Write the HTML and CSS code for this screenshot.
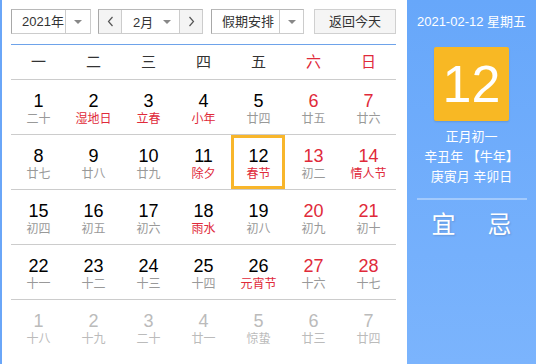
FILE: index.html
```html
<!DOCTYPE html>
<html lang="zh-CN">
<head>
  <meta charset="UTF-8">
  <title>万年历</title>
  <link rel="stylesheet" href="styles.css">
</head>
<body>
  <div class="calendar">
    <div class="main">
      <div class="toolbar">
        <div class="select year">
          <span class="value">2021年</span>
          <span class="drop"><i class="caret"></i></span>
        </div>
        <div class="month-group">
          <span class="nav prev">
            <svg width="7" height="11" viewBox="0 0 7 11"><path d="M5.5 1 L1.5 5.5 L5.5 10" fill="none" stroke="#555" stroke-width="1.2"/></svg>
          </span>
          <div class="month">
            <span class="value">2月</span>
            <i class="caret"></i>
          </div>
          <span class="nav next">
            <svg width="7" height="11" viewBox="0 0 7 11"><path d="M1.5 1 L5.5 5.5 L1.5 10" fill="none" stroke="#555" stroke-width="1.2"/></svg>
          </span>
        </div>
        <div class="select holiday">
          <span class="value">假期安排</span>
          <span class="drop"><i class="caret"></i></span>
        </div>
        <span class="today-btn">返回今天</span>
      </div>

      <div class="weekdays">
        <span>一</span><span>二</span><span>三</span><span>四</span><span>五</span>
        <span class="red">六</span><span class="red">日</span>
      </div>

      <div class="days">
        <div class="day"><b>1</b><small>二十</small></div>
        <div class="day fest"><b>2</b><small>湿地日</small></div>
        <div class="day fest"><b>3</b><small>立春</small></div>
        <div class="day fest"><b>4</b><small>小年</small></div>
        <div class="day"><b>5</b><small>廿四</small></div>
        <div class="day weekend"><b>6</b><small>廿五</small></div>
        <div class="day weekend"><b>7</b><small>廿六</small></div>

        <div class="day"><b>8</b><small>廿七</small></div>
        <div class="day"><b>9</b><small>廿八</small></div>
        <div class="day"><b>10</b><small>廿九</small></div>
        <div class="day fest"><b>11</b><small>除夕</small></div>
        <div class="day fest selected"><b>12</b><small>春节</small></div>
        <div class="day weekend"><b>13</b><small>初二</small></div>
        <div class="day weekend fest"><b>14</b><small>情人节</small></div>

        <div class="day"><b>15</b><small>初四</small></div>
        <div class="day"><b>16</b><small>初五</small></div>
        <div class="day"><b>17</b><small>初六</small></div>
        <div class="day fest"><b>18</b><small>雨水</small></div>
        <div class="day"><b>19</b><small>初八</small></div>
        <div class="day weekend"><b>20</b><small>初九</small></div>
        <div class="day weekend"><b>21</b><small>初十</small></div>

        <div class="day"><b>22</b><small>十一</small></div>
        <div class="day"><b>23</b><small>十二</small></div>
        <div class="day"><b>24</b><small>十三</small></div>
        <div class="day"><b>25</b><small>十四</small></div>
        <div class="day fest"><b>26</b><small>元宵节</small></div>
        <div class="day weekend"><b>27</b><small>十六</small></div>
        <div class="day weekend"><b>28</b><small>十七</small></div>

        <div class="day other"><b>1</b><small>十八</small></div>
        <div class="day other"><b>2</b><small>十九</small></div>
        <div class="day other"><b>3</b><small>二十</small></div>
        <div class="day other"><b>4</b><small>廿一</small></div>
        <div class="day other"><b>5</b><small>惊蛰</small></div>
        <div class="day other"><b>6</b><small>廿三</small></div>
        <div class="day other"><b>7</b><small>廿四</small></div>
      </div>
    </div>

    <aside class="side">
      <div class="side-date">2021-02-12 星期五</div>
      <div class="big-day">12</div>
      <div class="lunar-info">
        <p>正月初一</p>
        <p>辛丑年 【牛年】</p>
        <p>庚寅月 辛卯日</p>
      </div>
      <div class="divider"></div>
      <div class="yiji">
        <span>宜</span>
        <span>忌</span>
      </div>
    </aside>
  </div>
</body>
</html>
```

FILE: styles.css
```css
body {
  margin: 0;
  font-family: "Liberation Sans", "Noto Sans CJK SC", sans-serif;
  color: #333;
  background-color: #fff;
}

.calendar {
  display: flex;
  height: 364px;
  border-left: 2px solid #6aa6f8;
}

.main {
  width: 405px;
  box-sizing: border-box;
  padding: 9px 11px 0 9px;
}

/* toolbar */
.toolbar {
  display: flex;
  height: 25px;
  font-size: 13px;
}

.select,
.month-group,
.today-btn {
  display: flex;
  box-sizing: border-box;
  height: 25px;
  border: 1px solid #ccc;
  border-left-color: #a8a8a8;
  border-top-color: #b8b8b8;
}

.select .value {
  flex: 1;
  line-height: 23px;
  padding-left: 10px;
}

.drop {
  width: 24px;
  border-left: 1px solid #ccc;
  display: flex;
  align-items: center;
  justify-content: center;
}

.caret {
  width: 0;
  height: 0;
  border-top: 4px solid #888;
  border-left: 4px solid transparent;
  border-right: 4px solid transparent;
}

.year {
  width: 80px;
  margin-right: 7px;
}

.month-group {
  width: 105px;
  margin-right: 8px;
}

.nav {
  width: 22px;
  background-color: #f4f4f4;
  display: flex;
  align-items: center;
  justify-content: center;
}

.prev {
  border-right: 1px solid #ccc;
}

.next {
  border-left: 1px solid #ccc;
}

.month {
  flex: 1;
  display: flex;
  align-items: center;
  padding: 0 8px 0 11px;
}

.month .value {
  flex: 1;
}

.holiday {
  width: 93px;
  margin-right: 10px;
}

.holiday .drop {
  width: 23px;
}

.today-btn {
  width: 82px;
  justify-content: center;
  line-height: 23px;
  background-color: #f5f5f5;
  border-color: #d0d0d0;
}

/* weekday header */
.weekdays {
  display: grid;
  grid-template-columns: repeat(7, 1fr);
  margin-top: 10px;
  border-top: 1px solid #6ea3ea;
  border-bottom: 1px solid #ccc;
  height: 34px;
  line-height: 34px;
  text-align: center;
  font-size: 15px;
  color: #333;
}

.weekdays .red {
  color: #e02a3a;
}

/* day cells */
.days {
  display: grid;
  grid-template-columns: repeat(7, 1fr);
}

.day {
  position: relative;
  box-sizing: border-box;
  height: 55px;
  border-bottom: 1px solid #ccc;
  display: flex;
  flex-direction: column;
  align-items: center;
  padding-top: 10px;
}

.days .day:nth-last-child(-n+7) {
  border-bottom: none;
}

.day b {
  font-weight: normal;
  font-size: 18px;
  line-height: 22px;
  color: #000;
}

.day small {
  font-size: 12px;
  line-height: 14px;
  color: #999;
}

.day.weekend b {
  color: #e02a3a;
}

.day.fest small {
  color: #e02a3a;
}

.day.other b,
.day.other small {
  color: #bbb;
}

.day.selected::after {
  content: "";
  position: absolute;
  top: 0;
  left: 0;
  right: 1px;
  bottom: 0;
  border: 3px solid #f8b62b;
}

/* side panel */
.side {
  flex: 1;
  background: linear-gradient(to bottom, #67a7fa, #7bb4fd);
  color: #fff;
  display: flex;
  flex-direction: column;
  align-items: center;
  padding-top: 13px;
}

.side-date {
  font-size: 13px;
  line-height: 18px;
}

.big-day {
  margin-top: 16px;
  width: 75px;
  height: 74px;
  background-color: #f8b824;
  border-radius: 2px;
  box-shadow: 0 1px 2px rgba(0, 0, 0, 0.12);
  font-size: 52px;
  line-height: 74px;
  text-align: center;
}

.lunar-info {
  margin-top: 6px;
  text-align: center;
  font-size: 13px;
}

.lunar-info p {
  margin: 0;
  line-height: 20px;
}

.divider {
  margin-top: 11px;
  width: 110px;
  height: 2px;
  background-color: rgba(255, 255, 255, 0.35);
}

.yiji {
  margin-top: 10px;
  display: flex;
  gap: 32px;
  font-size: 24px;
  line-height: 30px;
  text-shadow: 1px 1px 2px rgba(0, 0, 0, 0.15);
}
```
